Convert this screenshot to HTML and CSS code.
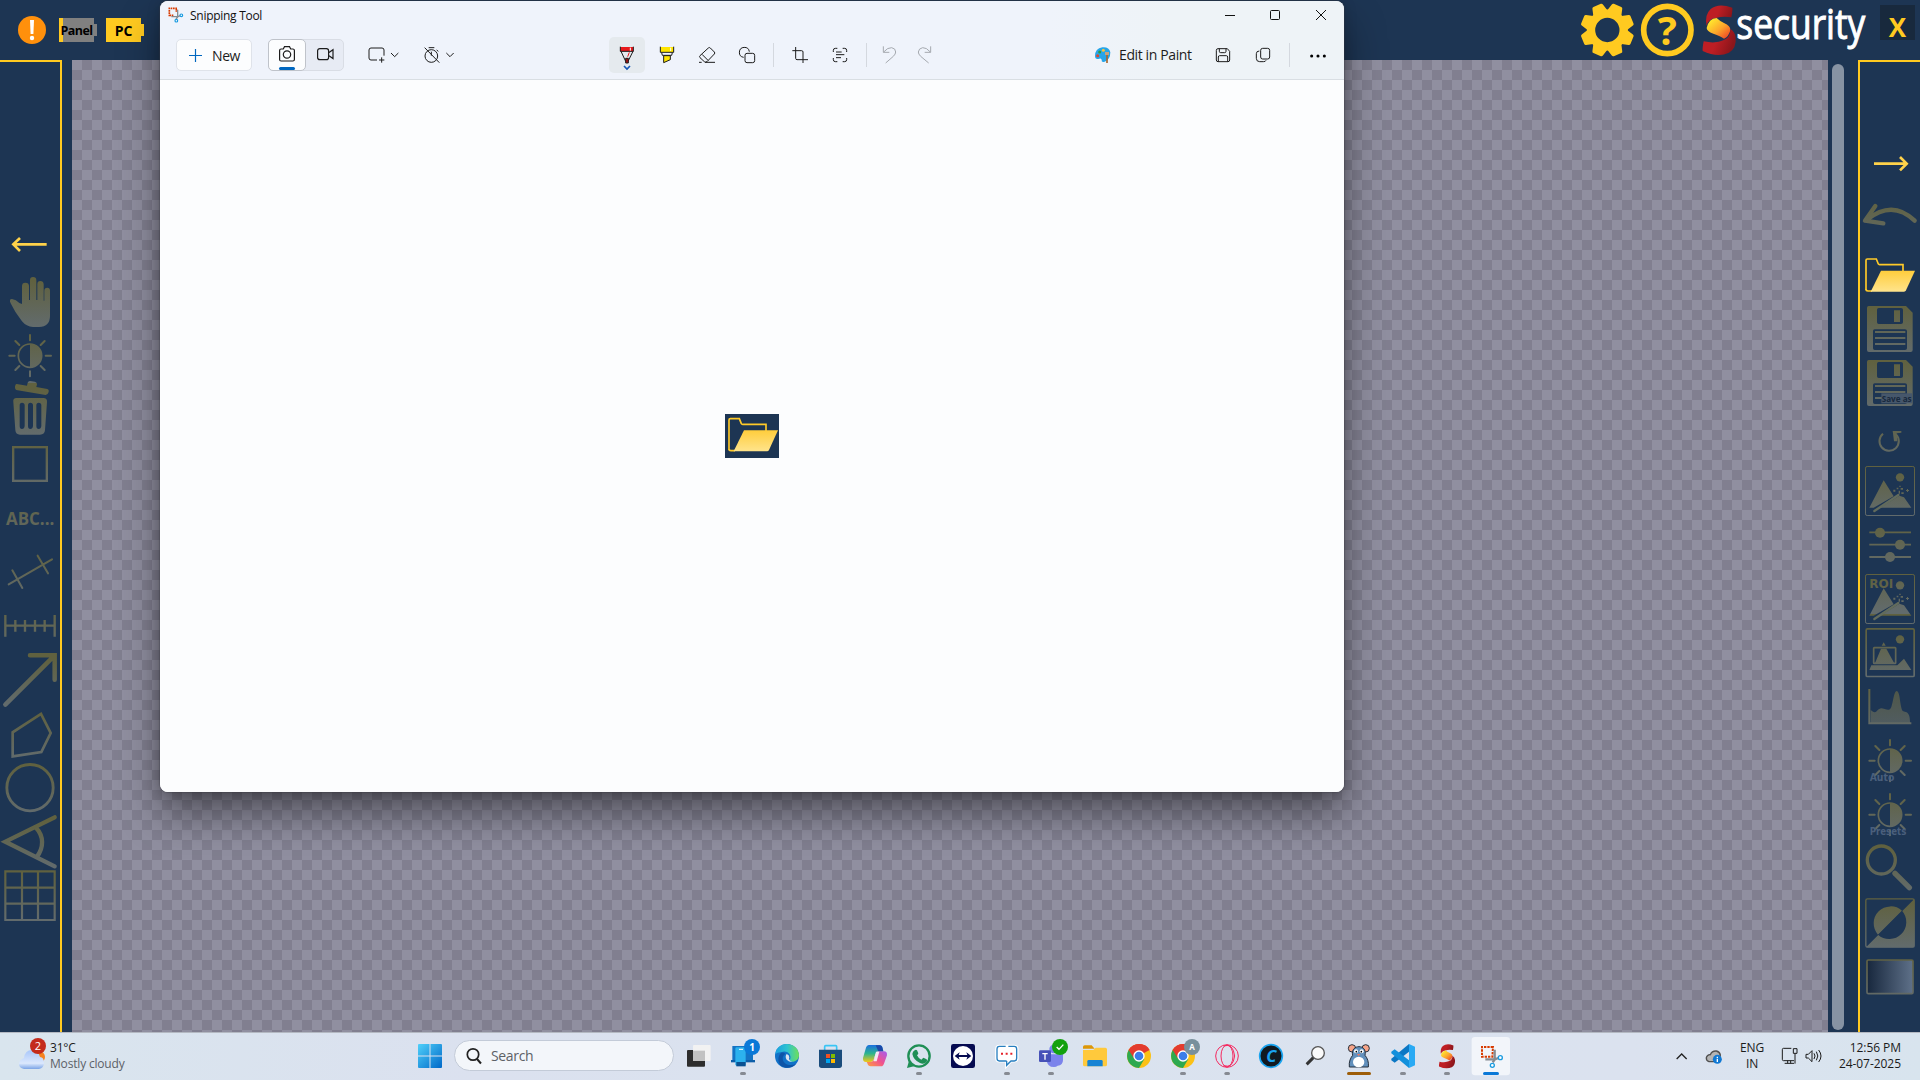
FILE: index.html
```html
<!DOCTYPE html>
<html lang="en">
<head>
<meta charset="utf-8">
<title>Snipping Tool</title>
<link rel="stylesheet" href="styles.css">
</head>
<body>
<svg class="defs" width="0" height="0">
  <defs>
    <linearGradient id="ga" gradientUnits="userSpaceOnUse" x1="0" y1="3" x2="0" y2="165" spreadMethod="repeat"><stop offset=".1" stop-color="#60613f"/><stop offset=".95" stop-color="#626b6c"/></linearGradient>
    <linearGradient id="gb" gradientUnits="userSpaceOnUse" x1="0" y1="117" x2="0" y2="279" spreadMethod="repeat"><stop offset=".1" stop-color="#60613f"/><stop offset=".95" stop-color="#626b6c"/></linearGradient>
    <linearGradient id="gc" gradientUnits="userSpaceOnUse" x1="0" y1="30" x2="0" y2="192" spreadMethod="repeat"><stop offset=".1" stop-color="#60613f"/><stop offset=".95" stop-color="#626b6c"/></linearGradient>
    <linearGradient id="gd" gradientUnits="userSpaceOnUse" x1="0" y1="156" x2="0" y2="318" spreadMethod="repeat"><stop offset=".1" stop-color="#60613f"/><stop offset=".95" stop-color="#626b6c"/></linearGradient>
    <linearGradient id="gfold" x1="0" y1="0" x2="0" y2="1"><stop offset="0" stop-color="#ffcd3c"/><stop offset="1" stop-color="#ffe48c"/></linearGradient>
    <linearGradient id="gslate" x1="0" y1="0" x2="1" y2="0"><stop offset="0" stop-color="#17273d"/><stop offset="1" stop-color="#5f7189"/></linearGradient>
    <linearGradient id="gwin" x1="0" y1="0" x2="1" y2="1"><stop offset="0" stop-color="#4fd0fa"/><stop offset="1" stop-color="#0068c8"/></linearGradient>
    <linearGradient id="gs" x1="0" y1="0" x2="1" y2="1"><stop offset=".1" stop-color="#ffee2e"/><stop offset=".55" stop-color="#fca52b"/><stop offset="1" stop-color="#ee3424"/></linearGradient>
    <linearGradient id="gred" x1="0" y1="0" x2="1" y2=".3"><stop offset=".5" stop-color="#be1e24"/><stop offset="1" stop-color="#8c161b"/></linearGradient>
    <linearGradient id="gedge" x1="0" y1="0" x2="1" y2="0"><stop offset="0" stop-color="#1a9fe0"/><stop offset=".5" stop-color="#2ec3d0"/><stop offset="1" stop-color="#6fe058"/></linearGradient>
    <linearGradient id="gcop1" x1="0" y1="0" x2="0" y2="1"><stop offset="0" stop-color="#1b6fe0"/><stop offset=".5" stop-color="#2cb48e"/><stop offset="1" stop-color="#f3c816"/></linearGradient>
    <linearGradient id="gcop2" x1="1" y1="0" x2="0" y2="1"><stop offset="0" stop-color="#a45cf0"/><stop offset=".5" stop-color="#f0528e"/><stop offset="1" stop-color="#ffa03c"/></linearGradient>
    <linearGradient id="gcloud" x1="0" y1="0" x2="0" y2="1"><stop offset="0" stop-color="#a8c6fa"/><stop offset=".7" stop-color="#dbe8fd"/><stop offset="1" stop-color="#7ba4e6"/></linearGradient>
    <g id="disk">
      <path fill-rule="evenodd" d="M266 528h112l20 20v112q0 6-6 6H267q-6 0-6-6V534q0-6 5-6zM296 534q-5 0-5 5v38q0 5 5 5h67q6 0 6-5v-38q0-5-6-5zM342 541h18v35h-18zM284 598q-5 0-5 5v52q0 5 5 5h91q6 0 6-5v-52q0-5-6-5z"/>
      <path d="M285 603h91v6h-91zM285 621h91v6h-91zM285 639h91v6h-91z"/>
    </g>
    <g id="folder">
      <path d="M258 480V391q0-4 4-4h27l6 15q1 2 4 2h70v20" fill="none" stroke="#ffca28" stroke-width="5"/>
      <path d="M258 478q0 5 6 5h12" fill="none" stroke="#ffca28" stroke-width="5"/>
      <path d="M303 422h102l-27 59q-2 4-6 4H272z" fill="url(#gfold)"/>
    </g>
    <g id="scene">
      <circle cx="360" cy="1042" r="12.500"/>
      <path d="M268 1133l43-82 30 48-60 34zM300 1133l58-36 14 5 22 31z"/>
      <path d="M283 1143l72-48" stroke-width="7" stroke-linecap="round" fill="none" class="wand-edge"/>
      <path d="M340 1079h6v6h-6zM350 1073h5v5h-5zM358 1067h4v4h-4zM362 1074h7v5h-7zM356 1082h4v9h-4zM364 1087h7v5h-7zM378 1080h9v3h-9zM381 1077h3v9h-3z"/>
    </g>
    <g id="sslogo">
      <path d="M515 52q4-20 3-29-42-15-65 4-19 18-12 50 4-20 28-23 22-7 46-2z" fill="url(#gred)"/>
      <path d="M441 84q6-28 30-30 8 8 22 15 20 8 19 22-5 20-19 25-10-8-32-15-20-7-20-17z" fill="url(#gs)"/>
      <path d="M432 124q-4 20-3 29 45 21 79 5 23-15 20-45-2-18-16-26 1 25-19 33-24 12-61 4z" fill="url(#gred)"/>
    </g>
    <g id="chrome">
      <circle cx="117" cy="108" r="36" fill="#fbc116"/>
      <path d="M117 108L86 90A36 36 0 0 1 148 90z" fill="#e33b2e"/>
      <path d="M86 90A36 36 0 0 0 117 144l16-27-16-9z" fill="#2da94f"/>
      <path d="M117 91h32q-8-19-32-19-20 0-31 18l17 27z" fill="#e33b2e"/>
      <circle cx="117" cy="108" r="17" fill="#fff"/><circle cx="117" cy="108" r="13" fill="#3b7de9"/>
    </g>
    <g id="sun">
      <circle cx="90" cy="407" r="35" fill="none" stroke-width="5"/>
      <path d="M90 372a35 35 0 0 1 0 70z"/>
      <path d="M90 345v16M90 454v15M28 407h16M137 407h16M46 363l12 12M122 375l12-12M46 450l12-12M122 438l12 12" stroke-width="6" stroke-linecap="round"/>
    </g>
  </defs>
</svg>

<div class="desktop">
  <header class="app-header">
    <div class="status">
      <svg width="28" height="28" viewBox="0 0 28 28"><circle cx="14" cy="14" r="14" fill="#ff900c"/><path d="M12 4h4l-.6 14h-2.800z" fill="#fff"/><circle cx="14" cy="22" r="2.200" fill="#fff"/></svg>
      <div class="battery panel"><span>Panel</span></div>
      <div class="battery pc"><span>PC</span></div>
    </div>
    <div class="brand">
      <svg width="60" height="60" viewBox="52 0 180 180" fill="#ffca20" stroke="#ffca20">
        <circle cx="143" cy="90" r="49" fill="none" stroke-width="25"/>
        <g stroke="none">
          <path id="tooth" d="M119 40l7-26q1-4 5-4h24q4 0 5 4l7 26z" transform="rotate(22.500 143 90)"/>
          <use href="#tooth" transform="rotate(45 143 90)"/><use href="#tooth" transform="rotate(90 143 90)"/><use href="#tooth" transform="rotate(135 143 90)"/><use href="#tooth" transform="rotate(180 143 90)"/><use href="#tooth" transform="rotate(225 143 90)"/><use href="#tooth" transform="rotate(270 143 90)"/><use href="#tooth" transform="rotate(315 143 90)"/>
        </g>
      </svg>
      <svg width="60" height="60" viewBox="232 0 180 180"><circle cx="323" cy="90" r="71" fill="none" stroke="#ffca20" stroke-width="17"/><text x="323" y="136" text-anchor="middle" class="help-mark">?</text></svg>
      <svg width="180" height="60" viewBox="412 0 540 180"><use href="#sslogo"/><text transform="translate(530 118) scale(.842 1)" class="brand-word">security</text></svg>
      <div class="app-close">X</div>
    </div>
  </header>

  <main class="workspace">
    <nav class="rail rail-left">
      <svg viewBox="0 3 180 162"><path d="M40 73h100M60 54L40 73l20 20" fill="none" stroke="#ffd24a" stroke-width="8"/></svg>
      <svg class="a" viewBox="0 165 180 162"><path d="M66 252v-54q0-10 10-10 11 0 11 10v42h3v-59q0-10 9-10 10 0 10 10v59h3v-47q0-10 9-10t10 10v49h2v-30q0-9 9-9 8 0 8 9v75q0 33-33 34h-18q-20-1-33-17-22-28-34-54-6-13 4-13 12 1 22 12z"/></svg>
      <svg class="a" viewBox="0 327 180 162"><use href="#sun"/></svg>
      <svg class="a" viewBox="0 489 180 162"><path fill-rule="evenodd" d="M50 492l31 5 2-9q2-6 8-5l14 2q6 2 6 8l-2 8 33 6q6 2 4 9t-9 9l-84-14q-9-2-8-11t5-8zM50 534h80q12 0 11 12l-6 84q-1 14-15 14H60q-13 0-14-14l-6-84q-2-12 10-12zM66 548q-7 0-7 8v62q0 9 7 9t8-9v-62q0-8-8-8zM91 548q-7 0-7 8v62q0 9 7 9t8-9v-62q0-8-8-8zM116 548q-7 0-7 8v62q0 9 7 9t8-9v-62q0-8-8-8z"/></svg>
      <svg class="a" viewBox="0 651 180 162"><rect x="39.500" y="681.500" width="101" height="101" fill="none" stroke-width="7"/></svg>
      <svg class="a" viewBox="0 813 180 162"><text x="18" y="915" textLength="145" lengthAdjust="spacingAndGlyphs" class="abc">ABC...</text></svg>
      <svg class="b" viewBox="0 -45 180 162"><path d="M26 73L156 -2M37 31l30 53M113 -13l31 53" stroke-width="6" stroke-linecap="round"/></svg>
      <svg class="b" viewBox="0 117 180 162"><path d="M16 197h148M16 165v65M164 165v65M46 180v35M75 180v35M105 180v35M134 180v35" stroke-width="7"/></svg>
      <svg class="b" viewBox="0 279 180 162"><path d="M16 434L164 286M90 286h74v73" fill="none" stroke-width="13.500" stroke-linecap="round"/></svg>
      <svg class="b" viewBox="0 441 180 162"><path d="M38 589v-72l85-55 29 57-28 57z" fill="none" stroke-width="8"/></svg>
      <svg class="b" viewBox="0 603 180 162"><circle cx="90" cy="683" r="69.500" fill="none" stroke-width="8.500"/></svg>
      <svg class="b" viewBox="0 765 180 162"><path d="M164 772L16 845l148 74M108 803c24 25 24 60 2 88" fill="none" stroke-width="13" stroke-linecap="round"/></svg>
      <svg class="b" viewBox="0 927 180 162"><path d="M16 934h148v146H16zM66 934v146M114 934v146M16 983h148M16 1031h148" fill="none" stroke-width="6.500"/></svg>
    </nav>

    <section class="canvas"></section>
    <div class="scrollbar"></div>

    <nav class="rail rail-right">
      <svg viewBox="240 30 180 162"><path d="M282 101h98M360 81l20 20-20 20" fill="none" stroke="#ffd24a" stroke-width="8"/></svg>
      <svg class="c" viewBox="240 192 180 162"><path d="M404 272Q338 208 262 268M286 228l-31 44 55 8" fill="none" stroke-width="13" stroke-linecap="round" stroke-linejoin="round"/></svg>
      <svg viewBox="240 354 180 162"><use href="#folder"/></svg>
      <svg class="c" viewBox="240 516 180 162"><g stroke="none"><use href="#disk"/></g></svg>
      <svg class="c" viewBox="240 678 180 162"><g stroke="none"><use href="#disk" y="162"/></g><rect x="304" y="790" width="92" height="30" fill="#46576b" stroke="none"/><text x="305" y="815" textLength="90" lengthAdjust="spacingAndGlyphs" class="save-as">Save as</text></svg>
      <svg class="c" viewBox="240 840 180 162"><path d="M309 911a29 29 0 1 0 39 2" fill="none" stroke-width="6"/><path d="M338 903h26v5l-14 2 2 24h-10l-3-24z" stroke="none"/></svg>
      <svg class="c" viewBox="240 1002 180 162"><rect x="256.500" y="1009.500" width="147" height="147" rx="5" fill="none" stroke-width="3"/><g stroke="none"><use href="#scene"/></g></svg>
      <svg class="d" viewBox="240 -6 180 162"><path d="M268 37h125M268 74h125M268 111h125" stroke-width="5.500"/><g stroke="none"><circle cx="300" cy="38" r="15"/><circle cx="360" cy="74" r="15"/><circle cx="330" cy="111" r="15"/></g></svg>
      <svg class="d" viewBox="240 156 180 162"><rect x="256.500" y="163.500" width="147" height="147" rx="5" fill="none" stroke-width="3"/><g stroke="none"><use href="#scene" y="-846"/><text x="268" y="203" textLength="72" lengthAdjust="spacingAndGlyphs" class="roi">ROI</text></g></svg>
      <svg class="d" viewBox="240 318 180 162"><rect x="258.500" y="326.500" width="144" height="143" rx="4" fill="none" stroke-width="5"/><rect x="281" y="383" width="66" height="47" rx="2" fill="none" stroke-width="5"/><g stroke="none"><circle cx="360" cy="358" r="12.500"/><path d="M311 367l6 10h-12zM303 386h16l25 46h-60zM268 450l6-14h78l20-20 22 34z"/></g></svg>
      <svg class="d" viewBox="240 480 180 162"><path d="M272 570c6 5 12 10 18 4 10-12 14-10 24-7 10 4 16 4 20-6 6-18 8-48 16-48 9 0 9 30 14 50 3 14 8 10 16 14 8 6 10 16 10 33H272z" stroke="none" opacity=".75"/><path d="M268 507v103h126" fill="none" stroke-width="6"/></svg>
      <svg class="d" viewBox="240 642 180 162"><use href="#sun" x="240" y="315"/><text x="269" y="783" textLength="74" lengthAdjust="spacingAndGlyphs" class="caption">Auto</text></svg>
      <svg class="d" viewBox="240 804 180 162"><use href="#sun" x="240" y="477"/><text x="269" y="944" textLength="110" lengthAdjust="spacingAndGlyphs" class="caption">Presets</text></svg>
      <svg class="d" viewBox="240 966 180 162"><circle cx="304" cy="1020" r="42" fill="none" stroke-width="10"/><path d="M345 1060l43 43" stroke-width="16" stroke-linecap="round"/></svg>
      <svg class="d" viewBox="240 1128 180 162"><rect x="257.500" y="1136.500" width="145" height="145" rx="5" fill="none" stroke-width="4"/><path d="M403 1137v145H258z" stroke="none"/><path d="M294 1244a51 51 0 0 1 72-72z" stroke="none"/><path d="M294 1244a51 51 0 0 0 72-72z" fill="#1d3553" stroke="none"/></svg>
      <svg class="d" viewBox="240 1290 180 162"><rect x="261" y="1320" width="138" height="101" rx="4" fill="url(#gslate)" stroke-width="5"/></svg>
    </nav>
  </main>

  <footer class="taskbar">
    <div class="weather">
      <svg width="31" height="40" viewBox="0 0 31 40"><circle cx="20" cy="19" r="6" fill="#f58220"/><path d="M5 32q-5-1-5-5t5-6q1-8 8-8 6 0 8 7 4 0 4 6 0 5-5 6z" fill="url(#gcloud)" transform="translate(0 -1)"/><circle cx="19" cy="8" r="8" fill="#c42b1c"/><text x="19" y="12" text-anchor="middle" class="badge-digit">2</text></svg>
      <div class="weather-text"><div>31°C</div><div class="muted">Mostly cloudy</div></div>
    </div>
    <svg class="start" width="24" height="24" viewBox="0 0 24 24" fill="url(#gwin)"><path d="M0 1q0-1 1-1h10.500v11.500H0zM12.500 0H23q1 0 1 1v10.500H12.500zM0 12.500h11.500V24H1q-1 0-1-1zM12.500 12.500H24V23q0 1-1 1H12.500z"/></svg>
    <div class="search"><svg width="16" height="18" viewBox="0 0 16 18"><circle cx="7" cy="7.500" r="5.700" fill="none" stroke="#222" stroke-width="1.700"/><path d="M11 12l4 4.500" stroke="#222" stroke-width="2"/></svg><span>Search</span></div>
    <div class="apps">
      <svg viewBox="51 36 132 144"><rect x="81" y="90" width="54" height="50" rx="3" fill="#2d2d2d"/><rect x="99" y="75" width="53" height="48" rx="3" fill="#f2f2f2"/><rect x="99" y="92" width="36" height="31" fill="#c2c2c2"/></svg>
      <svg viewBox="183 36 132 144"><path d="M217 78h62v46h-62z" fill="#1474c4"/><path d="M213 120h72v7h-72z" fill="#0d5ea8"/><rect x="226" y="82" width="31" height="55" rx="4" fill="#2cb2ee"/><path d="M229 126h28v13h-28z" fill="#0a5192"/><path d="M237 88h12" stroke="#fff" stroke-width="3"/><circle cx="276" cy="81" r="24" fill="#0a78d7"/><text x="276" y="92" text-anchor="middle" class="badge-num">1</text><rect x="240" y="156" width="18" height="9" rx="4.500" fill="#868a92"/></svg>
      <svg viewBox="315 36 132 144"><circle cx="381" cy="108" r="36" fill="#1272c8"/><path d="M346 102c4-40 66-40 71 2 0 20-20 24-29 19 10-14-2-30-18-28-14 1-22 5-24 7z" fill="url(#gedge)"/><path d="M368 116c2 16 20 24 40 16-8 10-24 14-36 10-22-6-20-36-8-44 4-2 10 0 12 4-5 3-8 8-8 14z" fill="#0e55a8"/><path d="M380 102q-6 8 0 17 6 7 18 7-14-4-10-14 0-8-8-10z" fill="#dbe3ef"/></svg>
      <svg viewBox="447 36 132 144"><path d="M494 90V80q0-3 3-3h30q3 0 3 3v10" fill="none" stroke="#3ac5f5" stroke-width="5"/><path d="M477 89h69v47q0 8-8 8h-53q-8 0-8-8z" fill="#1a4c7c"/><path d="M498 102h12v12h-12z" fill="#f25022"/><path d="M513 102h12v12h-12z" fill="#7fba00"/><path d="M498 117h12v12h-12z" fill="#00a4ef"/><path d="M513 117h12v12h-12z" fill="#ffb900"/></svg>
      <svg viewBox="579 36 132 144"><path d="M627 75h31q8 0 10 10l2 9h-14q-7 0-10 9l-5 16q-3 7-10 7h-13q-10 0-9-12l8-28q3-11 10-11z" fill="url(#gcop1)"/><path d="M663 139h-31q-8 0-10-9l-2-4h13q7 0 10-9l5-16q3-7 10-7h14q10 0 9 12l-8 22q-3 11-10 11z" fill="url(#gcop2)"/><path d="M647 76h11q8 0 10 10l2 8h-15z" fill="#1b48a8"/><path d="M648 95h10l-8 29h-9z" fill="#f3e9f4"/></svg>
      <svg viewBox="711 36 132 144"><circle cx="777" cy="108" r="32" fill="none" stroke="#1f8f55" stroke-width="7"/><path d="M741 144l6-22 15 17z" fill="#1f8f55"/><path d="M764 91q4-3 7 0l4 9q0 3-4 6 4 9 13 13l6-6 10 5q3 4-1 9-8 7-19 2-19-8-23-27 1-7 7-11z" fill="#1f8f55"/><rect x="768" y="156" width="18" height="9" rx="4.500" fill="#868a92"/></svg>
      <svg viewBox="843 36 132 144"><rect x="873" y="72" width="72" height="72" rx="7" fill="#050a50"/><circle cx="909" cy="108" r="30" fill="#fff"/><path d="M884 108l15-11-3 8h26l-3-8 15 11-15 11 3-8h-26l3 8z" fill="#050a50"/></svg>
      <svg viewBox="975 36 132 144"><path d="M1018 79h45q8 0 8 8v28q0 8-8 8h-10l-13 14v-14h-22q-8 0-8-8V87q0-8 8-8z" fill="#fff" stroke="#fff" stroke-width="9"/><path d="M1037 79h-19q-7 0-7 8v28q0 8 7 8h22M1045 79h18q7 0 7 8v28q0 8-7 8h-10l-13 13v-13" fill="none" stroke="#287fc0" stroke-width="4"/><path d="M1023 98h6v6h-6zM1037 98h6v6h-6zM1051 98h6v6h-6z" fill="#e5222a"/><rect x="1032" y="156" width="18" height="9" rx="4.500" fill="#868a92"/></svg>
      <svg viewBox="1107 36 132 144"><circle cx="1181" cy="87" r="13" fill="#7b83eb"/><path d="M1160 103h49v17q0 16-16 17-4 4-11 4-21 0-22-22z" fill="#7b83eb"/><rect x="1137" y="91" width="36" height="35" rx="4" fill="#4651b8"/><path d="M1147 99h16v4h-6v16h-4v-16h-6z" fill="#fff"/><circle cx="1200" cy="81" r="24" fill="#13a10e"/><path d="M1190 81l7 7 13-14" fill="none" stroke="#fff" stroke-width="4"/><rect x="1164" y="156" width="18" height="9" rx="4.500" fill="#868a92"/></svg>
      <svg viewBox="1239 36 132 144"><path d="M1269 81q0-5 5-5h21l9 10h-35z" fill="#dd9706"/><path d="M1269 90h31l7-7h29q5 0 5 5v46q0 5-5 5h-62q-5 0-5-5z" fill="#ffc93c"/><path d="M1282 139v-15q0-4 4-4h38q4 0 4 4v15z" fill="#1684d4"/></svg>
      <svg viewBox="51 36 132 144"><use href="#chrome"/></svg>
      <svg viewBox="183 36 132 144"><use href="#chrome" x="132"/><circle cx="276" cy="81" r="24" fill="#78909c"/><text x="276" y="90" text-anchor="middle" class="badge-letter">A</text><rect x="240" y="156" width="18" height="9" rx="4.500" fill="#868a92"/></svg>
      <svg viewBox="315 36 132 144" fill="none" stroke="#f5285f" stroke-width="3"><circle cx="381" cy="108" r="34"/><ellipse cx="381" cy="108" rx="18" ry="33"/><path d="M371 78q28-10 33 30-5 38-33 29"/><rect x="373" y="156" width="17" height="9" rx="4.500" fill="#868a92" stroke="none"/></svg>
      <svg viewBox="447 36 132 144"><circle cx="513" cy="108" r="34" fill="#111a20" stroke="#1aa4f0" stroke-width="5"/><text x="514" y="125" text-anchor="middle" class="c-mark">C</text></svg>
      <svg viewBox="579 36 132 144"><path d="M640 113l-20 20" stroke="#333" stroke-width="9"/><circle cx="654" cy="99" r="19" fill="#fafafa" stroke="#555" stroke-width="4"/></svg>
      <svg viewBox="711 36 132 144"><g stroke="#26303c" stroke-width="3"><circle cx="756" cy="85" r="11" fill="#f6a489"/><circle cx="797" cy="85" r="11" fill="#f6a489"/><path d="M748 141c-2-16 4-28 10-35-4-18 8-26 19-26s22 8 18 26c7 8 12 20 10 35z" fill="#6290bc"/></g><ellipse cx="776" cy="126" rx="17" ry="16" fill="#fff"/><circle cx="768" cy="94" r="6" fill="#fff"/><circle cx="785" cy="94" r="6" fill="#fff"/><circle cx="769" cy="95" r="2.500"/><circle cx="784" cy="95" r="2.500"/><path d="M771 102h10l-5 6z" fill="#ee7a66"/><rect x="741" y="156" width="72" height="9" rx="4.500" fill="#9d5d08"/></svg>
      <svg viewBox="843 36 132 144"><path d="M927 72v23l-43 33-10-7v-5z" fill="#0b77c4"/><path d="M927 144v-23l-43-33-10 7v5z" fill="#1290dc"/><path d="M927 72l18 8v56l-18 8z" fill="#2aaaf4"/><rect x="900" y="156" width="18" height="9" rx="4.500" fill="#868a92"/></svg>
      <svg viewBox="975 36 132 144"><use href="#sslogo" transform="translate(809 65) scale(.485)"/><rect x="1032" y="156" width="18" height="9" rx="4.500" fill="#868a92"/></svg>
      <svg viewBox="1107 36 132 144"><rect x="1115" y="51" width="115" height="115" rx="10" fill="#f2f5fa"/><path d="M1179 81h-33v29h31z" fill="none" stroke="#d83b01" stroke-width="6" stroke-dasharray="7 3"/><path d="M1184 89v30l-6 8M1156 118h29l10-4" fill="none" stroke="#868b91" stroke-width="7"/><circle cx="1201" cy="113" r="6" fill="#fff" stroke="#1a9be0" stroke-width="4"/><circle cx="1177" cy="136" r="6" fill="#fff" stroke="#1a9be0" stroke-width="4"/><rect x="1149" y="156" width="48" height="9" rx="4.500" fill="#0a78d7"/></svg>
    </div>
    <div class="tray">
      <svg width="12" height="48" viewBox="109 96 36 144"><path d="M111 177l15-15 15 15" fill="none" stroke="#222" stroke-width="4"/></svg>
      <svg width="18" height="48" viewBox="195 96 54 144"><path d="M207 185q-9-3-8-12 3-10 12-9 5-12 18-11 10 2 12 12l-4 20z" fill="#b4b4b4" stroke="#505050" stroke-width="4"/><circle cx="232" cy="178" r="13.500" fill="#0f78d4"/><path d="M230 176h4v10h-4zM230 170h4v4h-4z" fill="#fff"/></svg>
      <div class="lang"><div>ENG</div><div>IN</div></div>
      <svg width="18" height="48" viewBox="424 96 54 144" fill="none" stroke="#1b1b1b" stroke-width="3"><path d="M455 145h-24q-3 0-3 4v29q0 4 3 4h32M435 190h28M444 182v8M453 182v8M461 146h11v14h-11zM466 160v31"/></svg>
      <svg width="18" height="48" viewBox="496 96 54 144" fill="none" stroke="#1b1b1b" stroke-width="3"><path d="M499 163v11h7l11 11v-33l-11 11zM523 160q6 8 0 17M530 155q9 13 0 26M537 150q14 18 0 36"/></svg>
      <div class="clock"><div>12:56 PM</div><div>24-07-2025</div></div>
    </div>
  </footer>

  <article class="window">
    <div class="titlebar">
      <svg width="16" height="16" viewBox="506 22 48 48"><path d="M533 26h-23v24M510 47h12M531 28v9" fill="none" stroke="#d83b01" stroke-width="5" stroke-dasharray="5 2"/><path d="M535 30v22l-5 6M516 51h20l7-3" fill="none" stroke="#868b91" stroke-width="4"/><circle cx="546" cy="47" r="4" fill="#fff" stroke="#1a9be0" stroke-width="3.500"/><circle cx="531" cy="63" r="4" fill="#fff" stroke="#1a9be0" stroke-width="3.500"/></svg>
      <h1>Snipping Tool</h1>
      <div class="win-buttons">
        <svg viewBox="0 0 12 12"><path d="M1 6.500h10"/></svg>
        <svg viewBox="0 0 12 12"><rect x="1.500" y="1.500" width="9" height="9" rx="1"/></svg>
        <svg viewBox="0 0 12 12"><path d="M1 1l10 10M11 1L1 11"/></svg>
      </div>
    </div>
    <div class="toolbar">
      <div class="tools-left">
        <button class="new"><svg width="13" height="13" viewBox="0 0 13 13"><path d="M6.500 0v13M0 6.500h13" stroke="#0067c0" stroke-width="1.200"/></svg><span>New</span></button>
        <div class="modes">
          <div class="mode on"><svg width="16" height="16" viewBox="0 0 16 16"><path d="M.6 4.500q0-1.500 1.500-1.500h2.200L5.500.7h5L11.700 3h2.200q1.500 0 1.500 1.500v9q0 1.500-1.500 1.500H2.100Q.6 15 .6 13.500z"/><circle cx="8" cy="8.500" r="3.700"/></svg></div>
          <div class="mode video"><svg width="17" height="14" viewBox="0 0 17 14"><rect x=".6" y="1.600" width="11" height="11" rx="2.200"/><path d="M12 5.500l4-2.800v8.800l-4-2.800"/></svg></div>
        </div>
        <svg class="pick" width="32" height="18" viewBox="1102 138 96 54"><path d="M1129 180h-18q-6 0-6-6v-24q0-6 6-6h33q6 0 6 6v17M1143 172v16M1135 180h16M1171 159l11 11 11-11"/></svg>
        <svg class="pick timer" width="32" height="18" viewBox="1269 138 96 54"><circle cx="1294" cy="168" r="19"/><path d="M1286 143h17M1274 143l44 45M1294 155v12M1310 150l5 4M1339 159l11 11 11-11"/></svg>
      </div>
      <div class="tools-mid">
        <svg class="pen" width="36" height="36" viewBox="87 51 108 108"><path d="M121 81h39v13h-39z" fill="#e8191c" stroke="none"/><path d="M121 80v14h39V80M123 94l14 30h7l15-30"/><path d="M137 115h8v14h-8z" fill="#a11"/><path d="M151 83v9" stroke="#fff"/><path d="M148 97l-5 13" stroke="#e8191c"/><path d="M132 138l9 9 9-9" stroke="#1657b5" stroke-width="5"/></svg>
        <svg width="40" height="36" viewBox="201 51 120 108"><path d="M241 81h40v15h-40z" fill="#ffe500" stroke="none"/><path d="M241 80v17h40V80M245 98l2 8h28l2-8"/><path d="M251 107h20v12l-20 9z" fill="#ffe500"/><path d="M272 83v10" stroke="#fff"/></svg>
        <svg width="40" height="36" viewBox="321 51 120 108"><path d="M360 107l25-23q3-3 6 0l12 12q3 3 0 6l-22 23q-4 3-8 0l-13-12q-3-3 0-6zM366 103l18 18M357 127h8M375 127h30"/></svg>
        <svg width="40" height="36" viewBox="441 51 120 108"><path d="M491 112a15 15 0 1 1 17-17"/><rect x="495" y="100" width="29" height="28" rx="6"/></svg>
        <i class="sep wide"></i>
        <svg width="40" height="36" viewBox="600 51 120 108"><path d="M637 92h28q4 0 4 4v33M647 81v34q0 4 4 4h33"/></svg>
        <svg width="40" height="36" viewBox="720 51 120 108"><path d="M760 96v-5q0-6 6-6h6M788 85h6q6 0 6 6v5M760 114v5q0 6 6 6h6M788 125h6q6 0 6-6v-5M768 96h17M768 104h25M768 113h15"/></svg>
        <i class="sep narrow"></i>
        <svg class="off" width="36" height="36" viewBox="873 51 108 108"><path d="M910 79v18h18M911 96q12-14 24-13 12 2 12 13 0 6-7 13l-23 20"/></svg>
        <svg class="off" width="36" height="36" viewBox="981 51 108 108"><path d="M1052 79v18h-18M1051 96q-12-14-23-13-12 2-13 13 0 6 7 13l24 20"/></svg>
      </div>
      <div class="tools-right">
        <svg width="16" height="18" viewBox="106 138 48 54"><path d="M106 168q0-22 22-26 20-2 24 15 0 22-17 28-10 4-9-6-2-5-7-3-13 4-13-8z" fill="#27a5e8"/><circle cx="114" cy="167" r="4.500" fill="#e0452d"/><circle cx="120" cy="156" r="4.500" fill="#2d9a45"/><circle cx="131" cy="151" r="4.500" fill="#f5c23c"/><path d="M142 164v25" stroke="#a8672f" stroke-width="5"/><path d="M136 156h12v9h-12z" fill="#c9a27a"/></svg>
        <span class="paint">Edit in Paint</span>
        <svg class="line" width="40" height="36" viewBox="429 111 120 108"><path d="M474 146h28l7 8v26q0 5-5 5h-30q-5 0-5-5v-29q0-5 5-5zM478 146v8q0 4 4 4h12q4 0 4-4v-8M475 185v-14q0-4 4-4h20q4 0 4 4v14"/></svg>
        <svg class="line" width="40" height="36" viewBox="549 111 120 108"><rect x="602" y="145" width="27" height="32" rx="6"/><path d="M598 153q-9 0-9 8v14q0 10 10 10h11q7 0 8-4"/></svg>
        <i class="sep right"></i>
        <svg width="50" height="36" viewBox="699 111 150 108"><circle cx="755" cy="168" r="4.600"/><circle cx="774" cy="168" r="4.600"/><circle cx="793" cy="168" r="4.600"/></svg>
      </div>
    </div>
    <div class="preview"><div class="snip"><svg width="54" height="44" viewBox="246 373 162 132"><use href="#folder"/></svg></div></div>
  </article>
</div>
</body>
</html>
```
FILE: styles.css
```css
* { box-sizing: border-box; }
body { margin: 0; background: #1d3553; font-family: "Open Sans", "Noto Sans", sans-serif; overflow: hidden; }
svg { display: block; flex: none; }
.defs { position: absolute; }
.desktop { position: relative; width: 1920px; height: 1080px; display: flex; flex-direction: column; background: #1d3553; }

.app-header { height: 60px; display: flex; justify-content: space-between; }
.status { display: flex; align-items: center; padding-left: 18px; }
.battery { position: relative; height: 24px; font-weight: 700; color: #000; display: flex; align-items: center; justify-content: center; }
.battery::after { content: ""; position: absolute; top: 6px; left: 100%; width: 3px; height: 12px; background: inherit; }
.panel { width: 35px; margin-left: 13px; background: #808080; border-left: 4px solid #ffca20; font-size: 12.5px; letter-spacing: -.6px; }
.panel span { margin-left: -4px; }
.pc { width: 35px; margin-left: 12px; background: #ffca20; font-size: 14px; }
.brand { display: flex; padding-right: 5px; }
.brand-word { font: 126px "Open Sans", sans-serif; fill: #fff; stroke: #fff; stroke-width: 3; }
.help-mark { font: bold 120px "Open Sans", sans-serif; fill: #ffca20; }
.app-close { width: 35px; height: 35px; margin: 5px 0 0 3px; background: #18293d; color: #ffca20; font-size: 26px; font-weight: 700; line-height: 44px; text-align: center; }

.workspace { height: 972px; display: flex; }
.rail { width: 62px; height: 972px; border-top: 2px solid #ffca20; }
.rail svg { width: 60px; height: 54px; overflow: visible; }
.rail-left { border-right: 2px solid #ffca20; padding-top: 159px; }
.rail-right { border-left: 2px solid #ffca20; padding-top: 78px; margin-left: 14px; }
.a { fill: url(#ga); stroke: url(#ga); stroke-width: 0; }
.b { fill: url(#gb); stroke: url(#gb); }
.c { fill: url(#gc); stroke: url(#gc); stroke-width: 0; }
.d { fill: url(#gd); stroke: url(#gd); stroke-width: 0; }
.wand-edge { stroke: #626b5c; }
.abc { font: bold 54px "Open Sans", sans-serif; stroke: none; }
.save-as { font: bold 26px "Open Sans", sans-serif; fill: #18293d; stroke: none; }
.roi { font: bold 36px "DejaVu Sans", sans-serif; }
.caption { font: bold 29px "DejaVu Sans", sans-serif; fill: #4a5f7c; stroke: none; }
.canvas { width: 1756px; margin-left: 10px; background: repeating-conic-gradient(#817f90 0 25%, #908fa0 0 50%) 0 0 / 20px 20px; }
.scrollbar { width: 12px; margin: 4px 0 2px 4px; border-radius: 6px; background: #8793a3; }

.taskbar { height: 48px; display: flex; background: linear-gradient(90deg, #d9e5ee, #dbe1ef 25%, #dae3ef 50%, #dbe2ef 85%, #d8e4ee); box-shadow: inset 0 1px #b4b9c2; color: #1b1b1b; font-size: 12px; line-height: 16px; }
.weather { width: 418px; display: flex; padding: 8px 0 0 19px; }
.weather svg { margin-top: -2px; }
.weather-text { letter-spacing: -.18px; }
.muted { color: #5c6168; }
.badge-digit { font: 11px "Open Sans", sans-serif; fill: #fff; }
.start { margin-top: 12px; }
.search { width: 220px; height: 31px; margin: 8px 3px 0 12px; padding-left: 11px; display: flex; align-items: center; gap: 9px; border: 1px solid #c3cbd8; border-radius: 16px; background: #f3f6fa; color: #5d6166; font-size: 14px; letter-spacing: -.35px; }
.apps { display: flex; }
.apps svg { width: 44px; height: 48px; }
.badge-num { font: bold 30px "Open Sans", sans-serif; fill: #fff; }
.badge-letter { font: bold 24px "Open Sans", sans-serif; fill: #fff; }
.c-mark { font: italic bold 50px "Open Sans", sans-serif; fill: #1aa4f0; }
.tray { flex: 1; display: flex; padding-left: 163px; }
.tray svg:nth-of-type(2) { margin-left: 17px; }
.lang { width: 30px; margin: 8px 0 0 14px; text-align: center; letter-spacing: -.1px; }
.lang + svg { margin-left: 14px; }
.lang + svg + svg { margin-left: 6px; }
.clock { flex: 1; padding: 8px 19px 0 0; text-align: right; white-space: nowrap; letter-spacing: -.05px; }

.window { position: absolute; left: 160px; top: 1px; width: 1184px; height: 791px; display: flex; flex-direction: column; border-radius: 8px; overflow: hidden; background: #fcfdfe; box-shadow: 0 0 1px 1px rgba(60, 60, 70, .35), 0 22px 42px rgba(0, 0, 0, .42), 0 2px 14px rgba(0, 0, 0, .2); }
.titlebar { height: 30px; display: flex; align-items: center; padding: 0 17px 2px 8px; background: linear-gradient(90deg, #eff3fb 75%, #eef3f7 85%); }
.titlebar h1 { margin: 0 0 0 6px; font-size: 12px; font-weight: 400; color: #111; letter-spacing: -.28px; flex: 1; }
.win-buttons { display: flex; gap: 33px; }
.win-buttons svg { width: 12px; height: 12px; fill: none; stroke: #111; stroke-width: 1; }
.win-buttons svg:last-child { margin-left: 1px; }
.toolbar { height: 49px; display: flex; background: linear-gradient(90deg, #eff3fb 75%, #eef3f7 85%); border-bottom: 1px solid #d9dee3; font-size: 14px; color: #1c1c1c; }
.tools-left { width: 449px; display: flex; padding: 8px 0 0 16px; }
.new { width: 76px; height: 32px; padding: 0 0 0 12px; display: flex; align-items: center; gap: 10px; border: 1px solid #dfe3ea; border-radius: 5px; background: #fcfdfe; font: 14px "Open Sans", sans-serif; letter-spacing: -.4px; color: #1c1c1c; }
.modes { width: 76px; height: 32px; margin-left: 16px; display: flex; border: 1px solid #d9dde5; border-radius: 5px; background: #e7ebf4; }
.mode { position: relative; width: 37px; display: flex; align-items: center; justify-content: center; fill: none; stroke: #1c1c1c; stroke-width: 1.2; }
.video { padding: 0 0 2px 1px; }
.mode.on { width: 38px; height: 32px; margin: -1px 0 0 -1px; border: 1px solid #bfc3ca; border-radius: 5px; background: #fcfdfe; padding-bottom: 3px; }
.mode.on::after { content: ""; position: absolute; bottom: 0; left: 10px; width: 16px; height: 3px; border-radius: 2px; background: #0067c0; }
.pick { margin: 7px 0 0 24px; fill: none; stroke: #1c1c1c; stroke-width: 3; }
.timer { margin-left: 23px; }
.tools-mid { display: flex; padding-top: 6px; fill: none; stroke: #1c1c1c; stroke-width: 3; }
.pen { border-radius: 5px; background: #e5eaee; margin-right: 2px; }
.off { stroke: #a5a9af; }
.sep { height: 24px; border-left: 1px solid #d4d8df; margin-top: 6px; }
.wide { margin-left: 6px; width: 7px; }
.narrow { margin-left: 6px; width: 5px; }
.tools-right { margin-left: 152px; padding-top: 6px; display: flex; }
.tools-right > svg:first-child { margin-top: 9px; }
.paint { width: 84px; padding-left: 8px; line-height: 36px; white-space: nowrap; letter-spacing: -.38px; }
.line { fill: none; stroke: #1c1c1c; stroke-width: 3; }
.paint + .line { margin-left: 8px; }
.right { margin-left: 6px; width: 4px; }
.preview { flex: 1; display: flex; align-items: center; justify-content: center; background: #fcfdfe; }
.snip { width: 54px; height: 44px; background: #1d3553; }
```
